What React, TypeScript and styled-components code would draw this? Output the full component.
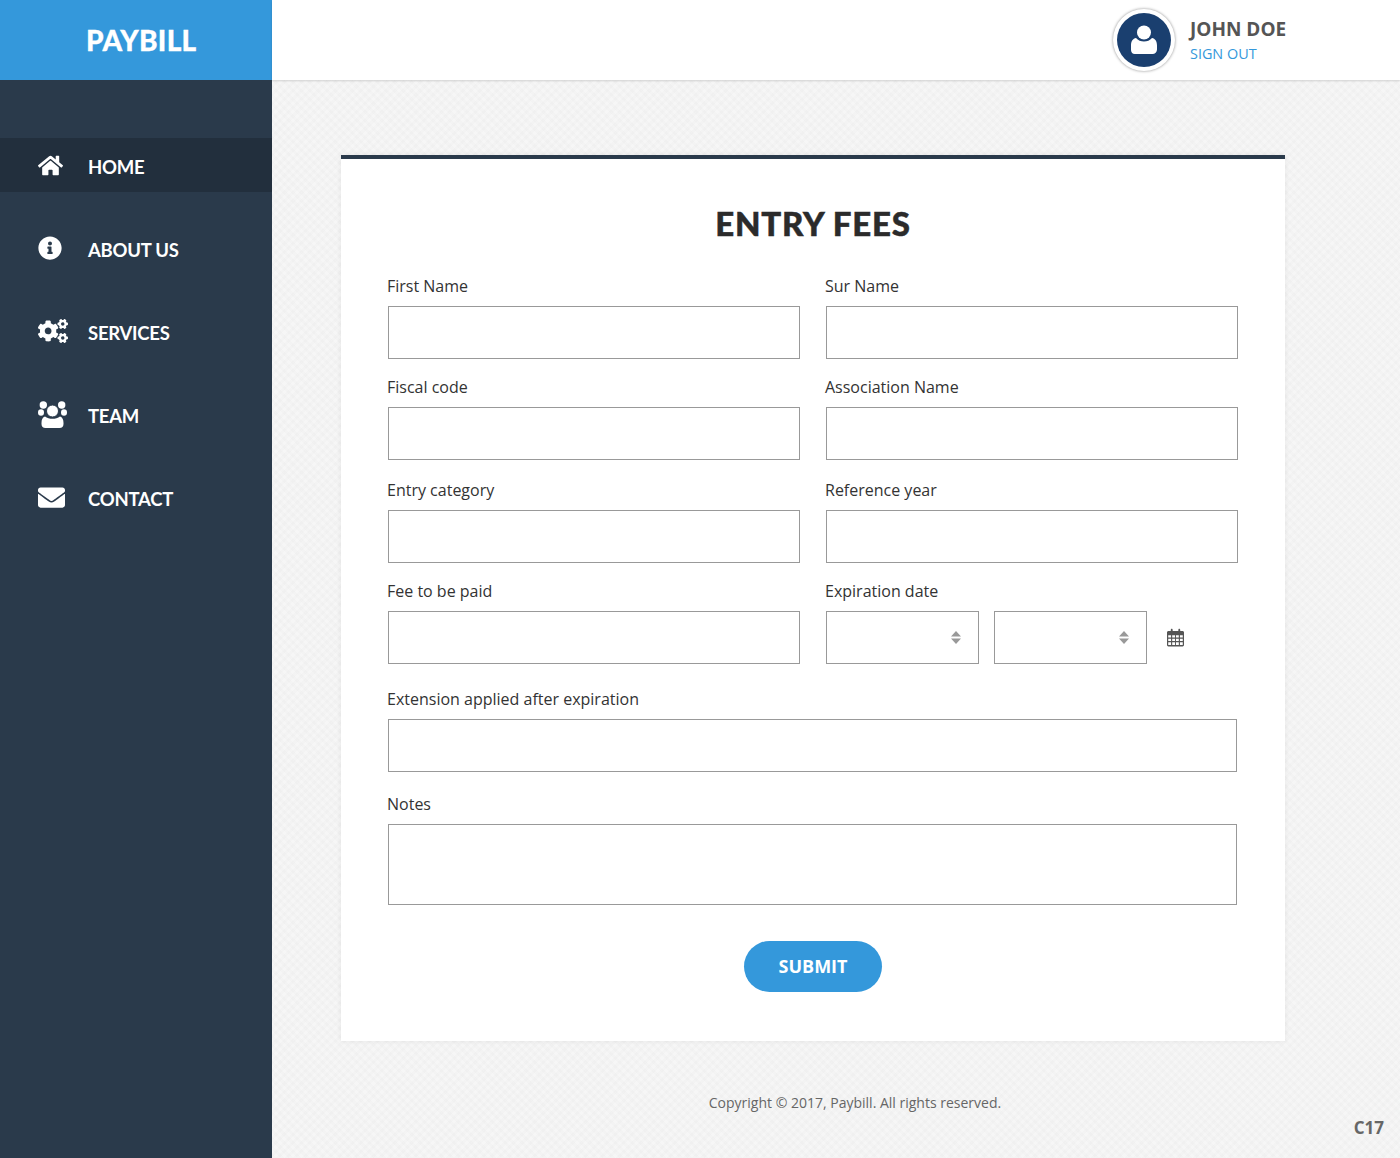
import styled, { createGlobalStyle } from "styled-components";
import { FaHome, FaInfoCircle, FaCogs, FaEnvelope } from "react-icons/fa";
import type { ReactNode } from "react";

const GlobalStyle = createGlobalStyle`
    html, body {
        margin: 0;
        padding: 0;
    }
    body {
        font-family: "Open Sans", "Liberation Sans", sans-serif;
        color: #333;
    }
    * {
        box-sizing: border-box;
    }
`;

const Page = styled.div`
    display: flex;
    min-height: 1158px;
    background-color: #f5f5f5;
`;

const Sidebar = styled.aside`
    width: 272px;
    flex-shrink: 0;
    background-color: #2a3a4b;
`;

const Logo = styled.div`
    height: 80px;
    padding-left: 86px;
    display: flex;
    align-items: center;
    background-color: #3498db;
    color: #fff;
    font-family: Lato, sans-serif;
    font-weight: 900;
    font-size: 28px;
    letter-spacing: 0.3px;
    -webkit-text-stroke: 0.3px #fff;
`;

const Nav = styled.nav`
    display: flex;
    flex-direction: column;
    gap: 29px;
    padding-top: 58px;
`;

const NavItem = styled.a<{ $active?: boolean }>`
    height: 54px;
    display: flex;
    align-items: center;
    padding-left: 38px;
    background-color: ${props => props.$active ? "#222f3d" : "transparent"};
    color: #fff;
    font-family: Lato, sans-serif;
    font-weight: 700;
    font-size: 18.500px;
    letter-spacing: -0.25px;
`;

const NavIcon = styled.span`
    width: 50px;
    height: 30px;
    flex-shrink: 0;
    display: flex;
    align-items: center;
`;

const NavLabel = styled.span`
    margin-top: 4px;
`;

const Main = styled.main`
    flex: 1;
    min-width: 0;
    display: flex;
    flex-direction: column;
    background-color: #f6f6f6;
    background-image:
        repeating-linear-gradient(45deg, rgba(0, 0, 0, 0.012) 0 3px, transparent 3px 6px),
        repeating-linear-gradient(-45deg, rgba(0, 0, 0, 0.012) 0 3px, transparent 3px 6px);
`;

const Header = styled.header`
    height: 80px;
    flex-shrink: 0;
    display: flex;
    align-items: center;
    justify-content: flex-end;
    gap: 15px;
    padding-right: 114px;
    background-color: #fff;
    box-shadow: 0 1px 2px rgba(0, 0, 0, 0.15);
`;

const Avatar = styled.div`
    width: 62px;
    height: 62px;
    border-radius: 50%;
    display: flex;
    align-items: center;
    justify-content: center;
    background-color: #fff;
    box-shadow: 0 0 3px rgba(0, 0, 0, 0.45);
`;

const AvatarInner = styled.div`
    width: 54px;
    height: 54px;
    border-radius: 50%;
    display: flex;
    align-items: center;
    justify-content: center;
    background-color: #1a3f6f;
`;

const UserInfo = styled.div`
    display: flex;
    flex-direction: column;
    width: 96px;
    padding-top: 2px;
    white-space: nowrap;
`;

const UserName = styled.div`
    font-size: 19px;
    font-weight: 700;
    line-height: 26px;
    color: #555;
`;

const SignOut = styled.a`
    font-size: 14.400px;
    line-height: 24px;
    color: #3498db;
`;

const Content = styled.div`
    padding: 75px 115px 0 69px;
`;

const Card = styled.section`
    padding: 0 46px 49px;
    border-top: 4px solid #2a3a4b;
    background-color: #fff;
    box-shadow: 0 0 5px rgba(0, 0, 0, 0.07);
`;

const Title = styled.h1`
    margin: 0 0 33px;
    padding-top: 44px;
    font-family: Lato, sans-serif;
    font-weight: 900;
    font-size: 33px;
    line-height: 40px;
    letter-spacing: 0.8px;
    text-align: center;
    color: #2b2b2b;
    -webkit-text-stroke: 0.5px #2b2b2b;
`;

const Row = styled.div<{ $gap: number }>`
    display: grid;
    grid-template-columns: 413px 413px;
    column-gap: 25px;
    margin-bottom: ${props => props.$gap}px;
`;

const FullRow = styled.div<{ $gap: number }>`
    margin-bottom: ${props => props.$gap}px;
`;

const Label = styled.label`
    display: block;
    margin-bottom: 10px;
    font-size: 16px;
    line-height: 20px;
    color: #333;
`;

const TextInput = styled.input`
    display: block;
    width: 412px;
    height: 53px;
    margin-left: 1px;
    border: 1px solid #999;
    border-radius: 0;
    background-color: #fff;
    outline: none;
`;

const WideInput = styled(TextInput)`
    width: 849px;
`;

const Notes = styled.textarea`
    display: block;
    width: 849px;
    height: 81px;
    margin-left: 1px;
    border: 1px solid #999;
    background-color: #fff;
    outline: none;
    resize: none;
`;

const DateRow = styled.div`
    display: flex;
    align-items: center;
    gap: 15px;
    margin-left: 1px;
`;

const SelectBox = styled.div`
    position: relative;
    width: 153px;
    height: 53px;
`;

const Select = styled.select`
    width: 100%;
    height: 100%;
    border: 1px solid #999;
    border-radius: 0;
    background-color: #fff;
    appearance: none;
    outline: none;
`;

const Spinner = styled.svg`
    position: absolute;
    top: 20px;
    right: 18px;
    pointer-events: none;
`;

const CalendarIcon = styled.svg`
    margin-left: 5px;
`;

const SubmitRow = styled.div`
    display: flex;
    justify-content: center;
`;

const SubmitButton = styled.button`
    width: 138px;
    height: 51px;
    padding: 0 0 2px;
    border: none;
    border-radius: 26px;
    background-color: #3498db;
    color: #fff;
    font-family: "Open Sans", sans-serif;
    font-size: 18px;
    font-weight: 700;
`;

const Footer = styled.footer`
    margin-top: 50px;
    padding-left: 38px;
    font-size: 14px;
    line-height: 24px;
    text-align: center;
    color: #666;
`;

const Stamp = styled.div`
    margin-top: 1px;
    padding-right: 16px;
    font-size: 17px;
    font-weight: 700;
    line-height: 24px;
    text-align: right;
    color: #666;
`;

const UsersIcon = () => (
    <svg width="29" height="27" viewBox="0 0 29 27">
        <circle cx="5.300" cy="4" r="3.700" fill="#fff" />
        <circle cx="23.700" cy="4" r="3.700" fill="#fff" />
        <ellipse cx="3" cy="11.500" rx="3" ry="3.200" fill="#fff" />
        <ellipse cx="26" cy="11.500" rx="3" ry="3.200" fill="#fff" />
        <circle cx="14.500" cy="10" r="6" fill="#fff" stroke="#2a3a4b" strokeWidth="1" />
        <path d="M7 15.500c2 1.500 4.800 2.300 7.500 2.300s5.500-.8 7.500-2.300c2.300.5 3.500 3 3.500 6.500v1c0 2.500-1.500 4-4 4H7.500c-2.500 0-4-1.500-4-4v-1c0-3.500 1.200-6 3.500-6.500z" fill="#fff" />
    </svg>
);

const menu: { label: string; icon: ReactNode; active?: boolean }[] = [
    { label: "HOME", icon: <FaHome size={25} />, active: true },
    { label: "ABOUT US", icon: <FaInfoCircle size={24} /> },
    { label: "SERVICES", icon: <FaCogs size={30} /> },
    { label: "TEAM", icon: <UsersIcon /> },
    { label: "CONTACT", icon: <FaEnvelope size={27} /> },
];

const SelectField = () => (
    <SelectBox>
        <Select />
        <Spinner width="10" height="13" viewBox="0 0 10 13" fill="#999">
            <path d="M5 0l5 5.500H0zM5 13L0 7.500h10z" />
        </Spinner>
    </SelectBox>
);

const App = () => {
    return (
        <Page>
            <GlobalStyle />
            <Sidebar>
                <Logo>PAYBILL</Logo>
                <Nav>
                    {menu.map((item) => (
                        <NavItem key={item.label} $active={item.active}>
                            <NavIcon>{item.icon}</NavIcon>
                            <NavLabel>{item.label}</NavLabel>
                        </NavItem>
                    ))}
                </Nav>
            </Sidebar>
            <Main>
                <Header>
                    <Avatar>
                        <AvatarInner>
                            <svg width="28" height="30" viewBox="0 0 28 30" fill="#fff">
                                <circle cx="14" cy="7.500" r="7" />
                                <path d="M6 13c2 2.500 5 3.500 8 3.500s6-1 8-3.500c3 .5 5 3 5 7.500v4c0 2.500-2 4.500-4.500 4.500h-17C3 29.500 1 27.500 1 25v-4.500C1 16 3 13.500 6 13z" />
                            </svg>
                        </AvatarInner>
                    </Avatar>
                    <UserInfo>
                        <UserName>JOHN DOE</UserName>
                        <SignOut>SIGN OUT</SignOut>
                    </UserInfo>
                </Header>
                <Content>
                    <Card>
                        <Title>ENTRY FEES</Title>
                        <Row $gap={18}>
                            <div><Label>First Name</Label><TextInput /></div>
                            <div><Label>Sur Name</Label><TextInput /></div>
                        </Row>
                        <Row $gap={20}>
                            <div><Label>Fiscal code</Label><TextInput /></div>
                            <div><Label>Association Name</Label><TextInput /></div>
                        </Row>
                        <Row $gap={18}>
                            <div><Label>Entry category</Label><TextInput /></div>
                            <div><Label>Reference year</Label><TextInput /></div>
                        </Row>
                        <Row $gap={25}>
                            <div><Label>Fee to be paid</Label><TextInput /></div>
                            <div>
                                <Label>Expiration date</Label>
                                <DateRow>
                                    <SelectField />
                                    <SelectField />
                                    <CalendarIcon width="17" height="19" viewBox="0 0 18 19" fill="#555">
                                        <path fillRule="evenodd" d="M1.500 2.500H4V1.500C4 .7 4.500.2 5 .2s1 .5 1 1.300v1h6v-1c0-.8.500-1.300 1-1.300s1 .5 1 1.300v1h2.500c.8 0 1.500.7 1.500 1.500v13.500c0 .8-.7 1.500-1.500 1.500h-15C.7 19 0 18.300 0 17.500V4c0-.8.700-1.500 1.500-1.500zM1.300 7v2.500h3V7zm4.200 0v2.500h3V7zm4 0v2.500h3V7zm4.200 0v2.500h3V7zM1.300 10.700v2.600h3v-2.600zm4.200 0v2.600h3v-2.600zm4 0v2.600h3v-2.600zm4.200 0v2.600h3v-2.600zM1.300 14.500v3h3v-3zm4.200 0v3h3v-3zm4 0v3h3v-3zm4.200 0v3h3v-3z" />
                                    </CalendarIcon>
                                </DateRow>
                            </div>
                        </Row>
                        <FullRow $gap={22}>
                            <Label>Extension applied after expiration</Label>
                            <WideInput />
                        </FullRow>
                        <FullRow $gap={36}>
                            <Label>Notes</Label>
                            <Notes />
                        </FullRow>
                        <SubmitRow>
                            <SubmitButton>SUBMIT</SubmitButton>
                        </SubmitRow>
                    </Card>
                </Content>
                <Footer>Copyright © 2017, Paybill. All rights reserved.</Footer>
                <Stamp>C17</Stamp>
            </Main>
        </Page>
    );
};

export default App;
